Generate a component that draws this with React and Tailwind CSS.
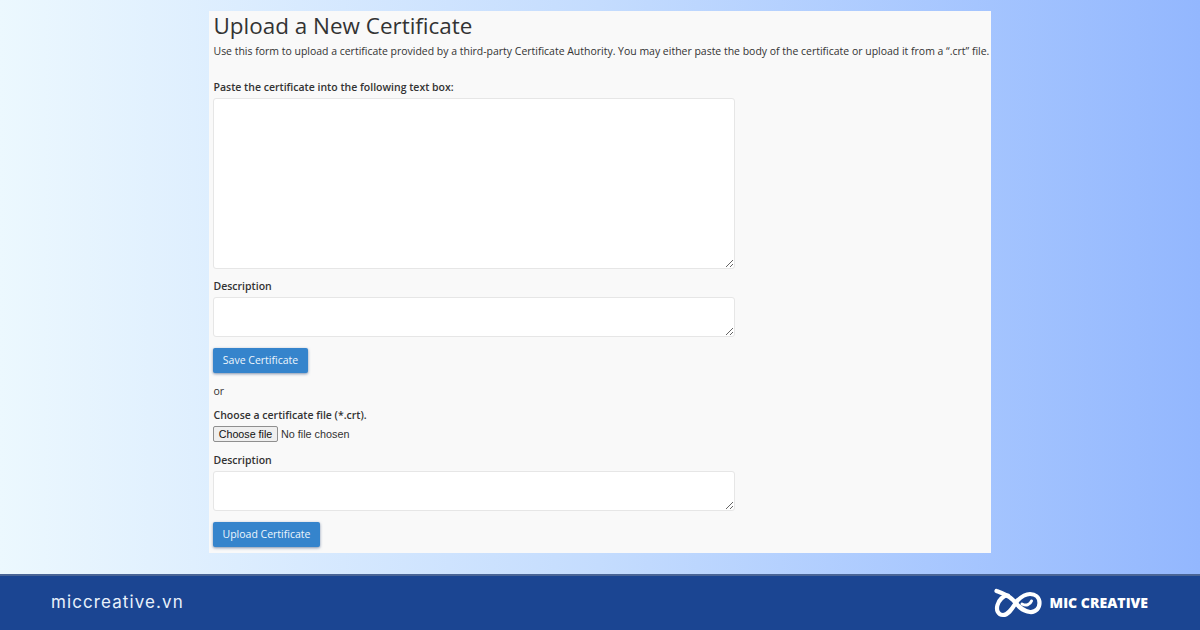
import React from "react";

const font = "font-['Open_Sans',sans-serif]";

const Label = ({ children, className = "" }) => (
  <label className={`block pl-[0.5px] text-[10.5px] leading-[14px] font-semibold text-[#333] ${className}`}>
    {children}
  </label>
);

const Box = ({ height }) => (
  <textarea className={`block w-[522px] ${height} bg-white border border-[#e6e6e6] rounded-[3px] outline-none`} />
);

const BlueButton = ({ children, width }) => (
  <button
    type="button"
    className={`block ${width} h-[25px] bg-[#3584cc] rounded-[2px] text-[10.5px] text-[#eef6fc] shadow-[0_1px_3px_rgba(30,60,110,0.55)]`}
  >
    {children}
  </button>
);

const Logo = () => (
  <svg width="48" height="30" viewBox="0 0 48 30" fill="none" stroke="#ffffff" strokeLinecap="round">
    <path
      d="M2.5 3 C8 5 14 7 19 12 C23 17 28 23 36 24 C42 24.5 45.5 20 45.5 15 C45.5 9 41 6 36 6 C30 6 26 10 23 13"
      strokeWidth="4.2"
    />
    <path d="M28 16 C32 18 36 17 37.5 13" strokeWidth="3" />
    <path
      d="M14 7.5 C9 7.5 5 12 3.5 17 C2 22 4 27 9 27 C15 27 19 19 23 13"
      strokeWidth="4.2"
    />
  </svg>
);

export default function App() {
  return (
    <div className={`${font} w-[1200px] h-[630px] overflow-hidden flex flex-col bg-gradient-to-r from-[#ecf8fe] via-[#c4dcfe] to-[#93b7fe]`}>
      <div className="h-[574px] pt-[11px] pl-[209px]">
        <main className="w-[782px] h-[542px] bg-[#f9f9f9] pl-[4px] pt-[1px]">
          <h1 className="pl-[0.5px] text-[22.45px] leading-[27px] text-[#333] whitespace-nowrap">Upload a New Certificate</h1>
          <p className="mt-[4px] pl-[0.5px] text-[10.48px] leading-[16px] text-[#333] whitespace-nowrap">
            Use this form to upload a certificate provided by a third-party Certificate Authority. You may either paste the body of the certificate or upload it from a “.crt” file.
          </p>
          <Label className="mt-[21px]">Paste the certificate into the following text box:</Label>
          <div className="mt-[4px]"><Box height="h-[171px]" /></div>
          <Label className="mt-[10px]">Description</Label>
          <div className="mt-[4px]"><Box height="h-[40px]" /></div>
          <div className="mt-[11px]"><BlueButton width="w-[95px]">Save Certificate</BlueButton></div>
          <p className="mt-[10px] pl-[0.5px] text-[10.5px] leading-[16px] text-[#333]">or</p>
          <Label className="mt-[9px]">Choose a certificate file (*.crt).</Label>
          <div className="mt-[4px] h-[16px] flex items-center">
            <button type="button" className="w-[65px] h-[16px] bg-[#efefef] border border-[#8f8f8f] rounded-[2px] font-['Liberation_Sans',sans-serif] text-[10.7px] leading-none text-[#111]">
              Choose file
            </button>
            <span className="ml-[3px] font-['Liberation_Sans',sans-serif] text-[10.8px] text-[#333]">No file chosen</span>
          </div>
          <Label className="mt-[11px]">Description</Label>
          <div className="mt-[4px]"><Box height="h-[40px]" /></div>
          <div className="mt-[11px]"><BlueButton width="w-[107px]">Upload Certificate</BlueButton></div>
        </main>
      </div>
      <footer className="h-[56px] bg-[#1b4592] border-t-2 border-[#4a6596] flex items-center justify-between pl-[51px] pr-[52px]">
        <span className="text-[17px] tracking-[1.1px] text-[#e8f1fb] font-['Inter',sans-serif]">miccreative.vn</span>
        <div className="flex items-center gap-[8px]">
          <Logo />
          <span className="text-[14.05px] font-extrabold text-white font-['Open_Sans',sans-serif]">MIC CREATIVE</span>
        </div>
      </footer>
    </div>
  );
}
